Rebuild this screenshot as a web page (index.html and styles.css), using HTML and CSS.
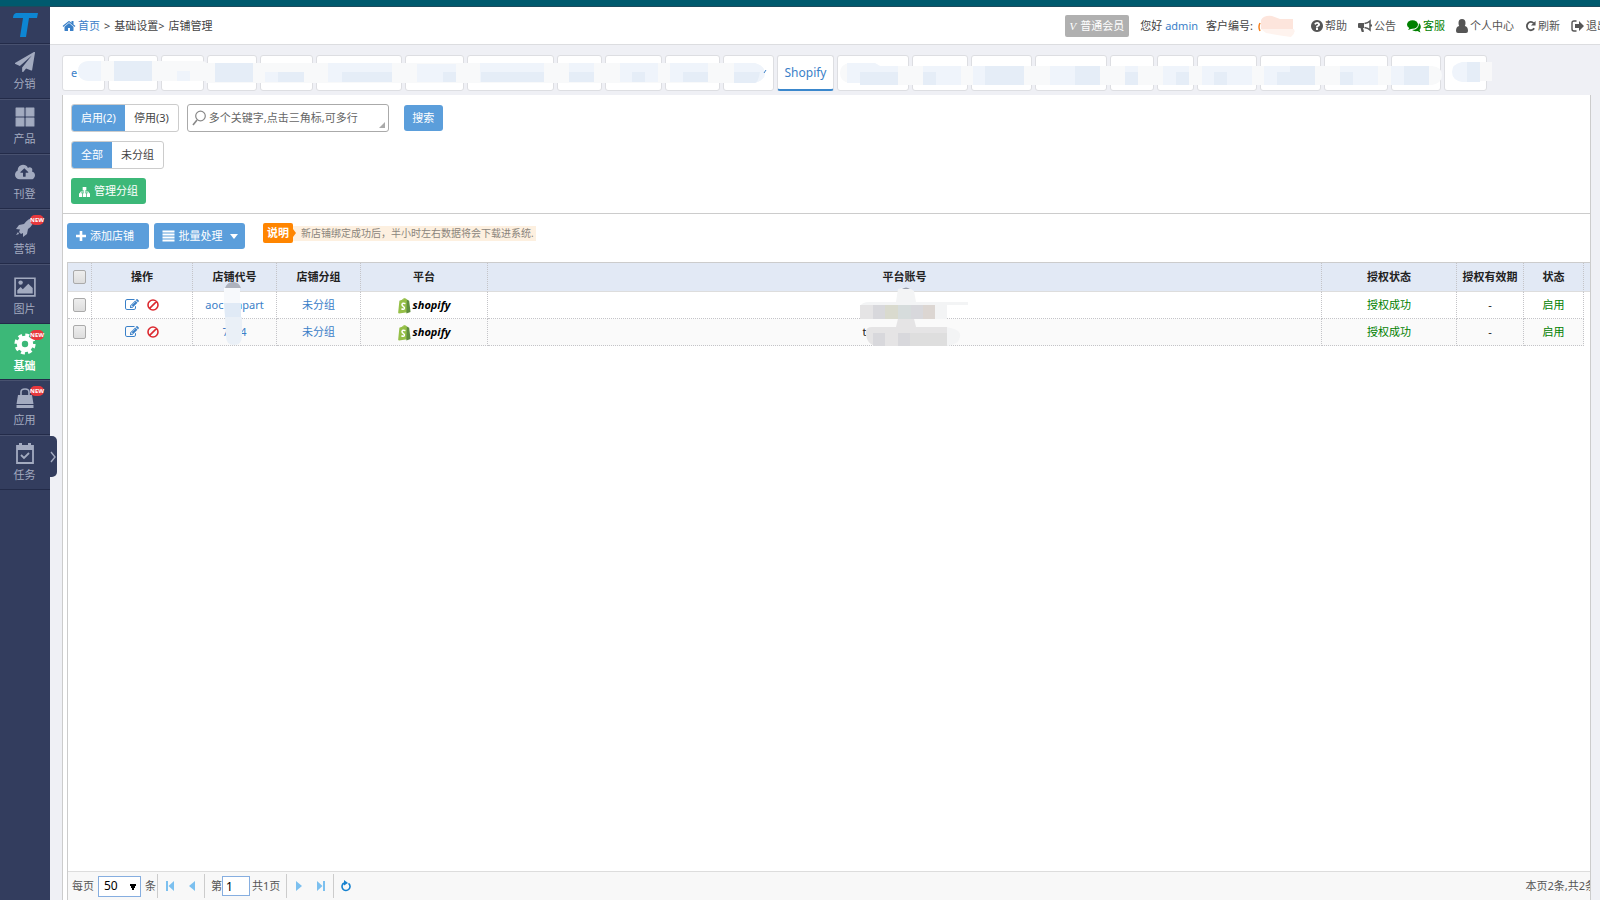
FILE: index.html
```html
<!DOCTYPE html>
<html lang="zh-CN">
<head>
<meta charset="utf-8">
<title>店铺管理</title>
<link rel="stylesheet" href="styles.css">
</head>
<body>
<svg class="defs" aria-hidden="true">
  <symbol id="edit" viewBox="0 0 1792 1792"><path d="M888 1184l116-116-152-152-116 116v56h96v96h56zm440-720q-16-16-33 1l-350 350q-17 17-1 33t33-1l350-350q17-17 1-33zm80 594v190q0 119-84.500 203.500t-203.500 84.500h-832q-119 0-203.500-84.500t-84.500-203.500v-832q0-119 84.500-203.500t203.500-84.500h832q63 0 117 25 15 7 18 23 3 17-9 29l-49 49q-14 14-32 8-23-6-45-6h-832q-66 0-113 47t-47 113v832q0 66 47 113t113 47h832q66 0 113-47t47-113v-126q0-13 9-22l64-64q15-15 35-7t20 29zm-96-738l288 288-672 672h-288v-288zm444 132l-92 92-288-288 92-92q28-28 68-28t68 28l152 152q28 28 28 68t-28 68z"/></symbol>
  <symbol id="ban" viewBox="0 0 12 12"><path d="M6 1a5 5 0 1 0 0 10a5 5 0 1 0 0-10M9.400 2.600L2.600 9.400" fill="none" stroke="currentColor" stroke-width="1.600"/></symbol>
  <symbol id="bag" viewBox="0 0 14 18"><path d="M2 3.500L8.500 1.500L10 3L12 16L1 17.500Q0 17.300 .2 16.500L1.500 4Z" fill="#95bf47"/><path d="M9.500 2.500L12 4L13.500 16L9 17.500Z" fill="#5e8e3e"/><path d="M4.300 4.500Q5.500 .8 7.500 1.500Q8.500 2 8.500 3.500" fill="none" stroke="#95bf47" stroke-width="1"/><path d="M8 7Q4.500 5.700 4.300 8Q4.400 9.300 6 10.200Q7.300 11 6.800 12.300Q6 13.800 3.700 12.500" fill="none" stroke="#fff" stroke-width="1.600"/></symbol>
</svg>
<div class="strip"></div>
<div class="app">
  <aside class="side">
    <a class="logo" href="#" aria-label="首页"><svg viewBox="0 0 25 24" width="25" height="24"><path d="M3 0H25L24 5H16L13 24H7L10 5H0Q0 1 3 0Z" fill="#0d86d3"/></svg></a>
    <a href="#"><svg viewBox="0 0 1792 1792" width="20" height="22"><path d="M1764 11q33 24 27 64l-256 1536q-5 29-32 45-14 8-31 8-11 0-24-5l-453-185-242 295q-18 23-49 23-13 0-22-4-19-7-30.500-23.500t-11.500-36.500v-349l864-1059-1069 925-395-162q-37-14-40-55-2-40 32-59l1664-960q15-9 32-9 20 0 36 11z"/></svg>分销</a>
    <a href="#"><svg viewBox="0 0 18 18" width="20" height="22"><path d="M1 1h7v7H1zM10 1h7v7h-7zM1 10h7v7H1zM10 10h7v7h-7z" stroke="currentColor" stroke-linejoin="round"/></svg>产品</a>
    <a href="#"><svg viewBox="0 128 1920 1664" width="20" height="22"><path d="M1280 992q0-14-9-23l-352-352q-9-9-23-9t-23 9l-351 351q-10 12-10 24 0 14 9 23t23 9h224v352q0 13 9.500 22.500t22.500 9.500h192q13 0 22.500-9.500t9.500-22.500v-352h224q13 0 22.500-9.500t9.500-22.500zm640 288q0 159-112.500 271.500t-271.500 112.500h-1088q-185 0-316.500-131.500t-131.500-316.500q0-130 70-240t188-165q-2-30-2-43 0-212 150-362t362-150q156 0 285.500 87t188.500 231q71-62 166-62 106 0 181 75t75 181q0 76-41 138 130 31 213.500 135.500t83.500 238.500z"/></svg>刊登</a>
    <a href="#"><svg viewBox="0 0 20 22" width="20" height="22"><path d="M19 2Q13 2 9 8L4 9L1 13L5 13.500L4 16L6 18L8 17L8 21L12 18L13 13Q19 9 19 2ZM3 16L1 19L4 18Z"/></svg>营销<i class="new">NEW</i></a>
    <a class="pic" href="#"><svg viewBox="0 0 20 20" width="22" height="22"><path d="M1 2H19V18H1Z" fill="none" stroke="currentColor" stroke-width="1.500"/><circle cx="6" cy="6" r="2"/><path d="M3 16V13L6 10L8 12L13 7L17 11V16Z"/></svg>图片</a>
    <a class="on" href="#"><svg viewBox="0 0 22 22" width="22" height="22"><circle cx="11" cy="11" r="5.700" fill="none" stroke="currentColor" stroke-width="5"/><circle cx="11" cy="11" r="9" fill="none" stroke="currentColor" stroke-width="3.200" stroke-dasharray="3.900 3.170"/></svg>基础<i class="new">NEW</i></a>
    <a href="#"><svg viewBox="0 0 20 22" width="20" height="22"><path d="M3 8H17L18.500 17H1.500ZM1.500 18H18.500V21H1.500Z"/><path d="M6 9V5Q6 2 10 2T14 5V9" fill="none" stroke="currentColor" stroke-width="1.600"/></svg>应用<i class="new">NEW</i></a>
    <a href="#"><svg viewBox="0 0 20 22" width="20" height="22"><path d="M2 4H18V21H2Z" fill="none" stroke="currentColor" stroke-width="1.800"/><path d="M2 4H18V8H2ZM4 1H7V5H4ZM13 1H16V5H13Z"/><path d="M6 13L9 16L14 11" fill="none" stroke="currentColor" stroke-width="1.800"/></svg>任务</a>
    <button class="fold" aria-label="展开"><svg viewBox="0 0 6 12" width="6" height="12"><path d="M1 1L5 6L1 11" fill="none" stroke="currentColor" stroke-width="1.400"/></svg></button>
  </aside>
  <div class="main">
    <header class="top">
      <nav class="crumb"><a href="#"><svg viewBox="0 128 1792 1536" width="14" height="14"><path d="M1472 992v480q0 26-19 45t-45 19h-384v-384h-256v384h-384q-26 0-45-19t-19-45v-480q0-1 .5-3t.5-3l575-474 575 474q1 2 1 6zm223-69l-62 74q-8 9-21 11h-3q-13 0-21-7l-692-577-692 577q-12 8-24 7-13-2-21-11l-62-74q-8-10-7-23.500t11-21.500l719-599q32-26 76-26t76 26l244 204v-195q0-14 9-23t23-9h192q14 0 23 9t9 23v408l219 182q10 8 11 21.500t-7 23.500z"/></svg>首页</a><span>&gt;</span><span>基础设置&gt;</span><span>店铺管理</span></nav>
      <div class="user">
        <span class="level"><em>V</em>普通会员</span>
        <span>您好 <a class="blue" href="#">admin</a></span>
        <span class="cust">客户编号:<svg class="blob" viewBox="0 0 38 22" width="38" height="22"><path d="M2 8Q0 12 2 16" fill="none" stroke="#f58220" stroke-width="1.500"/><path d="M3 14V5Q6 0 14 1L22 4H35V14Z" fill="#fde5dc"/><path d="M3 14H36Q38 18 33 22Q20 20 8 18Z" fill="#fef3ee"/></svg></span>
        <a href="#"><svg viewBox="128 128 1536 1536" width="12" height="12"><path d="M1024 1376v-192q0-14-9-23t-23-9h-192q-14 0-23 9t-9 23v192q0 14 9 23t23 9h192q14 0 23-9t9-23zm256-672q0-88-55.500-163t-138.500-116-170-41q-243 0-371 213-15 24 8 42l132 100q7 6 19 6 16 0 25-12 53-68 86-92 34-24 86-24 48 0 85.500 26t37.500 59q0 38-20 61t-68 45q-63 28-115.500 86.500t-52.500 125.500v36q0 14 9 23t23 9h192q14 0 23-9t9-23q0-19 21.500-49.500t54.500-49.500q32-18 49-28.500t46-35 44.500-48 28-60.500 12.500-81zm384 192q0 209-103 385.500t-279.500 279.500-385.500 103-385.500-103-279.500-279.500-103-385.500 103-385.500 279.500-279.500 385.500-103 385.500 103 279.500 279.500 103 385.500z"/></svg>帮助</a>
        <a href="#"><svg viewBox="0 0 14 14" width="14" height="14"><path d="M0 5Q0 4 1 4H6V9H5L6 12.500Q4.500 13.500 3.500 12.500L2.500 9H1Q0 9 0 8Z"/><path d="M6.500 4.500Q10 4 12 2V11Q10 9 6.500 8.500" fill="none" stroke="currentColor" stroke-width="1.500"/><path d="M12 5.500H14V7.500H12Z"/></svg>公告</a>
        <a class="green" href="#"><svg viewBox="0 0 14 14" width="14" height="14"><ellipse cx="5.500" cy="5.500" rx="5.500" ry="4.300"/><path d="M1 11L3 8L5.500 9.500Z"/><path d="M12 4Q14 6 13.800 8T12.500 11L13.500 13.500L10.500 12Q7 12.600 5 11Q12 10.500 12 4Z"/></svg>客服</a>
        <a href="#"><svg viewBox="0 0 12 14" width="12" height="14"><path d="M6 0Q9.500 0 9.500 4Q9.500 6 8.800 7Q12 7.500 12 12Q12 14 10 14H2Q0 14 0 12Q0 7.500 3.200 7Q2.500 6 2.500 4Q2.500 0 6 0Z"/></svg>个人中心</a>
        <a href="#"><svg viewBox="0 0 12 12" width="11" height="12"><path d="M10 8.500A4.300 4.500 0 1 1 9.500 3" fill="none" stroke="currentColor" stroke-width="2"/><path d="M11.500 .5V5.500H6.500Z"/></svg>刷新</a>
        <a href="#"><svg viewBox="0 0 13 12" width="13" height="12"><path d="M5.500 1H3Q1 1 1 3V9Q1 11 3 11H5.500" fill="none" stroke="currentColor" stroke-width="1.400"/><path d="M4 4H8V1L13 6L8 11V8H4Z"/></svg>退出</a>
      </div>
    </header>
    <nav class="tabs">
      <a href="#">e</a><a href="#"></a><a href="#"></a><a href="#"></a><a href="#"></a><a href="#"></a><a href="#"></a><a href="#"></a><a href="#"></a><a href="#"></a><a href="#"></a><a href="#"></a><a class="cur" href="#">Shopify</a><a href="#"></a><a href="#"></a><a href="#"></a><a href="#"></a><a href="#"></a><a href="#"></a><a href="#"></a><a href="#"></a><a href="#"></a><a href="#"></a><a href="#"></a>
      <svg class="mask" viewBox="62 55 1430 34" width="1430" height="34">
        <path d="M88 61H200Q206 61 206 63H755Q765 66 765 73T755 83H206V81H88Q78 80 78 71T88 61ZM850 63H875L880 66H1432Q1442 67 1442 75T1432 85H860V83H850Q840 82 840 73T850 63Z" fill="#f8f9fa"/>
        <g fill="#eff4fb"><path d="M88 61H101V81H88Q78 80 78 71T88 61ZM177 71H190V81H177ZM265 72H304V82H265ZM328 63H392V82H328ZM417 64H456V82H417ZM480 63H544V82H480ZM569 63H594V82H569ZM620 63H658V82H620ZM670 63H708V82H670ZM734 63H755Q765 66 765 73T755 83H734ZM847 63H875L880 66H898V85H860V83H847ZM923 66H961V85H923ZM973 66H1024V85H973ZM1050 66H1100V85H1050ZM1125 66H1138V85H1125ZM1163 66H1189V85H1163ZM1202 66H1252V85H1202ZM1264 66H1315V85H1264ZM1340 66H1378V85H1340ZM1391 66H1429V85H1391ZM1462 62H1480V82H1462Q1452 80 1452 72T1462 62Z"/></g>
        <g fill="#e5edf7"><path d="M114 61H152V81H114ZM215 63H253V82H215ZM278 72H304V82H278ZM342 72H392V82H342ZM443 72H456V82H443ZM481 72H544V82H481ZM569 72H594V82H569ZM632 72H645V82H632ZM683 72H708V82H683ZM734 72H760Q758 83 755 83H734ZM860 72H898V85H860ZM923 72H936V85H923ZM985 66H1024V85H985ZM1075 66H1100V85H1075ZM1125 72H1138V85H1125ZM1176 72H1189V85H1176ZM1214 72H1227V85H1214ZM1277 72H1315V85H1277ZM1290 66H1315V72H1290ZM1340 72H1353V85H1340ZM1404 66H1429V85H1404ZM1467 62H1480V82H1467Z"/></g>
        <path d="M1480 62H1492V81H1480Z" fill="#f8f8f9"/>
        <path d="M766 70L764 73" stroke="#3a80c8"/>
      </svg>
    </nav>
    <main class="panel">
      <form class="filters">
        <div class="line">
          <div class="seg"><button type="button" class="sel">启用(2)</button><button type="button">停用(3)</button></div>
          <label class="search"><svg viewBox="0 0 14 16" width="14" height="16"><circle cx="8.500" cy="6" r="4.800" fill="none" stroke="#888" stroke-width="1.200"/><path d="M5 10L1 15" stroke="#888" stroke-width="1.600"/></svg><input aria-label="搜索关键字" placeholder="多个关键字,点击三角标,可多行"></label>
          <button type="button" class="btn find">搜索</button>
        </div>
        <div class="line"><div class="seg"><button type="button" class="sel">全部</button><button type="button">未分组</button></div></div>
        <div class="line"><button type="button" class="btn manage"><svg viewBox="0 0 12 12" width="11" height="11"><path d="M4 1H8V5H4ZM0 8H3.500V12H0ZM4.300 8H7.700V12H4.300ZM8.500 8H12V12H8.500Z"/><path d="M6 4V9M1.800 9V6.500H10.200V9" fill="none" stroke="currentColor"/></svg>管理分组</button></div>
      </form>
      <div class="tools">
        <button class="btn add"><svg viewBox="0 0 10 10" width="10" height="10"><path d="M3.700 0H6.300V3.700H10V6.300H6.300V10H3.700V6.300H0V3.700H3.700Z"/></svg>添加店铺</button>
        <button class="btn batch"><svg viewBox="0 0 12 12" width="13" height="12"><path d="M0 .5H12V2.500H0ZM0 3.500H12V5.500H0ZM0 6.500H12V8.500H0ZM0 9.500H12V11.500H0Z"/></svg>批量处理<svg class="caret" viewBox="0 0 8 5" width="8" height="5"><path d="M0 0H8L4 5Z"/></svg></button>
        <b class="note">说明</b><span class="tip">新店铺绑定成功后，半小时左右数据将会下载进系统.</span>
      </div>
      <section class="grid">
        <table>
          <colgroup><col class="c0"><col class="c1"><col class="c2"><col class="c2"><col class="c4"><col><col class="c6"><col class="c7"><col class="c8"><col class="c9"></colgroup>
          <thead><tr><th><input type="checkbox" aria-label="全选"></th><th>操作</th><th>店铺代号</th><th>店铺分组</th><th>平台</th><th>平台账号</th><th>授权状态</th><th>授权有效期</th><th>状态</th><th></th></tr></thead>
          <tbody>
            <tr><td><input type="checkbox" aria-label="选择店铺 1"></td><td><span class="ops"><button aria-label="编辑"><svg width="14" height="14"><use href="#edit"/></svg></button><button class="stop" aria-label="停用"><svg width="12" height="12"><use href="#ban"/></svg></button></span></td>
              <td class="code"><a href="#">aoc</a><svg class="smear" viewBox="0 0 18 64" width="18" height="64"><path d="M1 6Q3 0 9 0T17 6Z" fill="#aeb2bd"/><path d="M0 6H16V21H0Z" fill="#f7f9fc"/><path d="M0 21H17V35H1Z" fill="#e0eaf6"/><path d="M1 35H18V54Q18 63 10 63T2 54Z" fill="#eaf0f7"/></svg><a href="#">npart</a></td>
              <td><a href="#">未分组</a></td><td><span class="brand"><svg width="13" height="17"><use href="#bag"/></svg>shopify</span></td>
              <td class="acct"><svg class="smudge" viewBox="0 0 112 62" width="112" height="62"><path d="M38 2Q47 -2 54 4L56 15H108V18H87V32H54L56 40H85Q102 42 100 50Q98 58 87 59H20Q8 58 6 45H12V41H36L38 32H0V20Q1 15 10 15H36Z" fill="#f3f4f5"/><path d="M42 2Q46 -1 50 2Z" fill="#999fac"/><path d="M0 18H75V32H0ZM38 32H54L56 40H87V59H17Q6 58 6 45Q6 40 12 40H36Z" fill="#e5e4e5"/><path d="M13 18H25V32H13ZM51 18H63V32H51ZM13 46H25V59H13ZM38 46H50V59H38Z" fill="#d8d8dc"/><path d="M25 18H38V32H25Z" fill="#d9dace"/><path d="M38 18H51V32H38Z" fill="#d6dcdc"/><path d="M63 18H75V32H63Z" fill="#dcd6d2"/><path d="M50 46H87V59H50Z" fill="#dedede"/></svg></td>
              <td class="ok">授权成功</td><td>-</td><td class="ok">启用</td><td class="end"></td></tr>
            <tr><td><input type="checkbox" aria-label="选择店铺 2"></td><td><span class="ops"><button aria-label="编辑"><svg width="14" height="14"><use href="#edit"/></svg></button><button class="stop" aria-label="停用"><svg width="12" height="12"><use href="#ban"/></svg></button></span></td>
              <td class="code"><a class="wide" href="#"><span>7</span><span>4</span></a></td><td><a href="#">未分组</a></td><td><span class="brand"><svg width="13" height="17"><use href="#bag"/></svg>shopify</span></td>
              <td class="acct"><span class="name">t</span></td><td class="ok">授权成功</td><td>-</td><td class="ok">启用</td><td class="end"></td></tr>
          </tbody>
        </table>
        <footer class="pager">
          <label for="size">每页</label><select id="size"><option>50</option></select><span>条</span><i class="bar"></i>
          <button aria-label="首页"><svg viewBox="0 0 8 10" width="8" height="10"><path d="M0 0H2V10H0ZM8 0V10L2.500 5Z"/></svg></button>
          <button aria-label="上一页"><svg viewBox="0 0 6 10" width="6" height="10"><path d="M6 0V10L0 5Z"/></svg></button><i class="bar"></i>
          <label class="pg">第<input value="1"></label><span class="total">共1页</span><i class="bar"></i>
          <button aria-label="下一页"><svg viewBox="0 0 6 10" width="6" height="10"><path d="M0 0V10L6 5Z"/></svg></button>
          <button aria-label="末页"><svg viewBox="0 0 8 10" width="8" height="10"><path d="M6 0H8V10H6ZM0 0V10L5.500 5Z"/></svg></button><i class="bar"></i>
          <button class="re" aria-label="刷新"><svg viewBox="0 0 10 12" width="10" height="12"><path d="M7.500 3.300A4 4 0 1 1 3 3" fill="none" stroke="currentColor" stroke-width="1.600"/><path d="M3 0L7 3L3 5.500Z"/></svg></button>
          <span class="sum">本页2条,共2条</span>
        </footer>
      </section>
    </main>
  </div>
</div>
</body>
</html>
```

FILE: styles.css
```css
* { box-sizing: border-box; }
body { margin: 0; height: 100vh; display: flex; flex-direction: column; overflow: hidden; background: #eff0f5; color: #444; font: 11px/16px "Noto Sans", "Noto Sans CJK SC", sans-serif; }
a { color: #3a80c8; text-decoration: none; }
button, input, select { font: inherit; color: inherit; margin: 0; }
button { border: 0; padding: 0; background: none; cursor: pointer; }
svg { fill: currentColor; flex: none; display: block; }
.defs { width: 0; height: 0; position: absolute; }
.strip { height: 7px; flex: none; background: #005a6e; border-bottom: 1px solid #1d4a5c; }
.app { flex: 1; display: flex; min-height: 0; }

.side { width: 50px; flex: none; background: #333d5e; position: relative; z-index: 2; }
.side a { height: 55px; display: flex; flex-direction: column; align-items: center; justify-content: flex-end; gap: 3px; padding: 0 1px 6px 0; color: #a3abc0; border-bottom: 1px solid #232b49; border-top: 1px solid #48516f; position: relative; }
.side .logo { height: 37px; border-top: 0; justify-content: center; padding: 0; }
.side .pic { height: 60px; }
.side .on { height: 56px; background: #3cb878; color: #fff; border-top-color: #3cb878; font-weight: bold; padding-bottom: 5px; }
.new { position: absolute; right: 6px; top: 5px; width: 14px; height: 10px; border-radius: 5px; background: #e8383d; color: #fff; font: bold 6px/10px "Noto Sans", sans-serif; text-align: center; }
.fold { position: absolute; left: 48px; top: 429px; width: 9px; height: 41px; background: #333d5e; color: #a3abc0; border-radius: 0 5px 5px 0; display: flex; align-items: center; justify-content: center; }

.main { flex: 1; min-width: 0; display: flex; flex-direction: column; }
.top { height: 38px; flex: none; background: #fff; border-bottom: 1px solid #dcdde0; display: flex; justify-content: space-between; align-items: center; padding-left: 12px; white-space: nowrap; }
.crumb, .crumb a { display: flex; align-items: center; gap: 4px; }
.crumb a { gap: 2px; }
.user { display: flex; align-items: center; gap: 11px; margin-right: -8px; }
.user > a { display: flex; align-items: center; gap: 2px; color: #555; }
.user > a.green { color: #008000; }
.level { background: #b0b0b0; color: #fff; border-radius: 2px; padding: 3px 5px; height: 22px; display: flex; gap: 4px; }
.level em { font-family: "Liberation Serif", serif; }
.cust { display: flex; align-items: center; gap: 5px; margin: 0 4px 0 -3px; }

.tabs { display: grid; grid-template-columns: 43px 50px 43px 50px 53px 86px 59px 87px 45px 57px 55px 51px 57px 72px 56px 61px 72px 44px 37px 60px 61px 64px 50px 43px; gap: 3px; height: 34px; margin: 10px 0 6px 12px; flex: none; position: relative; }
.tabs a { background: #fff; border: 1px solid #dddee2; border-radius: 3px; padding: 0 8px; line-height: 33px; }
.tabs .cur { border-bottom: 2px solid #3a87cc; text-align: center; padding: 0; font-size: 12px; }
.mask { position: absolute; left: 0; top: 0; }

.panel { flex: 1; min-height: 0; background: #fff; margin: 0 9px 0 12px; border: 1px solid #ccc; border-top: 0; border-bottom: 0; display: flex; flex-direction: column; overflow: hidden; }
.filters { border-bottom: 1px solid #ccc; padding: 9px 8px; display: flex; flex-direction: column; gap: 9px; }
.line { display: flex; align-items: center; }
.seg { display: flex; height: 28px; border: 1px solid #ccc; border-radius: 3px; overflow: hidden; }
.seg button { padding: 0 9px; }
.seg .sel, .btn { background: #5b9edb; color: #fff; }
.btn { display: flex; align-items: center; justify-content: center; height: 26px; border-radius: 3px; gap: 4px; }
.search { width: 202px; height: 28px; margin: 0 15px 0 8px; border: 1px solid #aaa; border-radius: 3px; display: flex; align-items: center; gap: 3px; padding-left: 4px; position: relative; }
.search input { flex: 1; min-width: 0; border: 0; outline: 0; padding: 0; background: none; }
.search input::placeholder { color: #666; }
.search::after { content: ""; position: absolute; right: 3px; bottom: 3px; border: 3px solid #aaa; border-top-color: transparent; border-left-color: transparent; }
.find { width: 39px; }
.manage { background: #3cb878; width: 75px; }
.tools { display: flex; align-items: flex-start; padding: 9px 0 13px 4px; }
.add { width: 82px; padding-right: 6px; }
.batch { width: 91px; margin: 0 18px 0 5px; }
.caret { margin-left: 3px; }
.note { background: #ff8500; color: #fff; border-radius: 2px; height: 20px; padding: 2px 4px; position: relative; }
.note::after { content: ""; position: absolute; left: 100%; top: 6px; border: 4px solid transparent; border-left: 3px solid #ff8500; border-right: 0; }
.tip { background: #fdf0e0; color: #8b857c; font-size: 10px; line-height: 15px; margin-top: 3px; padding: 0 2px 0 8px; }

.grid { flex: 1; min-height: 0; margin-left: 4px; border: 1px solid #ccc; border-right: 0; border-bottom: 0; display: flex; flex-direction: column; justify-content: space-between; }
table { width: 100%; table-layout: fixed; border-collapse: separate; border-spacing: 0; color: #222; }
th, td { padding: 0; text-align: center; border-right: 1px dotted #c4c4c8; border-bottom: 1px dotted #c4c4c8; height: 27px; }
th { height: 29px; background: #e2e9f5; border-bottom: 1px solid #ddd; }
th:last-child, td.end { border-right: 0; }
td.end { border-bottom: 0; background: #fff; }
tbody tr:last-child { background: #fafafa; }
.c0 { width: 24px; } .c1 { width: 101px; } .c2 { width: 84px; } .c4 { width: 127px; } .c6 { width: 135px; } .c7 { width: 67px; } .c8 { width: 60px; } .c9 { width: 6px; }
th input, td input { appearance: none; display: block; width: 13px; height: 14px; margin: 0 auto; border: 1px solid #aaa; border-radius: 2px; background: linear-gradient(#eee, #ddd); }
.ops { display: flex; justify-content: center; gap: 8px; color: #3a80c8; }
.stop { color: #dc2a30; }
.code { position: relative; }
.code > a:first-child { margin-right: 12px; }
.code > a.wide { display: flex; justify-content: space-between; width: 24px; margin: 0 auto; }
.smear { position: absolute; left: 31px; top: -10px; z-index: 1; }
.brand { display: flex; align-items: center; justify-content: center; gap: 2px; color: #000; font: italic bold 11px/16px "Open Sans", sans-serif; }
.ok { color: #008000; }
.acct { position: relative; }
.smudge { position: absolute; left: calc(50% - 45px); top: -5px; z-index: 1; }
.name { display: block; padding-right: 80px; }

.pager { height: 29px; border-top: 1px solid #ddd; background: #f8f8f8; display: flex; align-items: center; white-space: nowrap; padding-left: 4px; overflow: hidden; color: #555; }
.pager select { appearance: none; width: 43px; height: 21px; margin: 0 4px; padding: 0 5px; border: 1px solid #86aee0; border-radius: 0; color: #000; font-size: 12px; background: linear-gradient(#000, #000) 31px 7px / 6px 2px no-repeat, linear-gradient(#000, #000) 32px 9px / 4px 2px no-repeat, linear-gradient(#000, #000) 33px 11px / 2px 2px no-repeat, #fff; }
.pager button { color: #7cc0ef; width: 22px; display: flex; justify-content: center; }
.bar { width: 1px; height: 24px; background: #ccc; margin: 0 1px; }
.pg { display: flex; align-items: center; margin-left: 5px; }
.pg input { width: 28px; height: 20px; border: 1px solid #86aee0; padding: 0 3px; color: #000; font-size: 12px; margin-right: 2px; }
.total { margin-right: 5px; }
.pager .re { color: #1481cf; }
.sum { margin-left: auto; margin-right: -6px; }
```
